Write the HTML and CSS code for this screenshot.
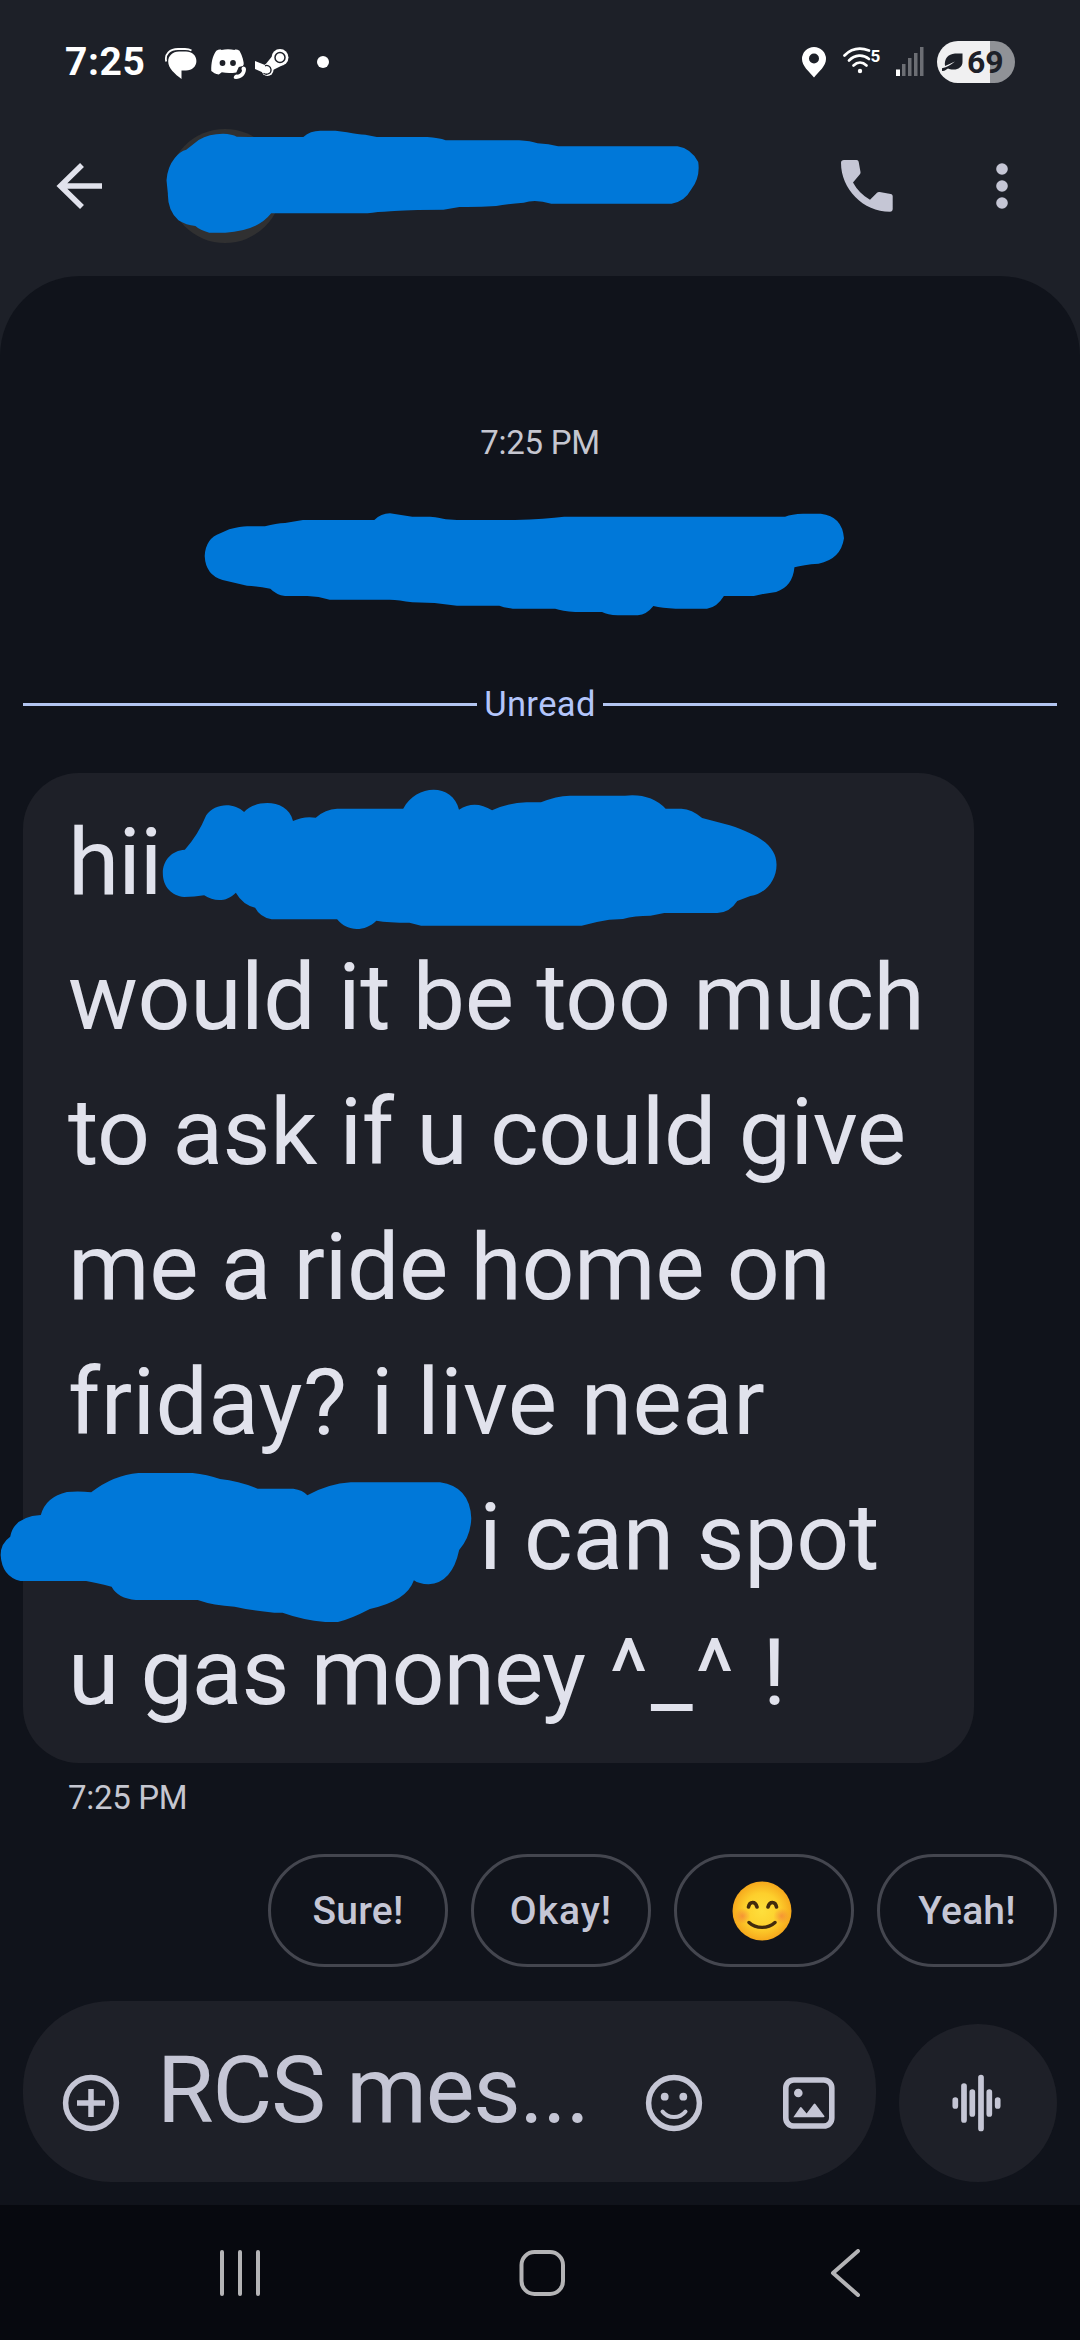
FILE: index.html
```
<!DOCTYPE html>
<html lang="en">
<head>
<meta charset="utf-8">
<title>Messages</title>
<link rel="stylesheet" href="styles.css">
</head>
<body>
<div class="screen">
  <div class="status">
    <span class="clock">7:25</span>
    <svg class="ic-chat" width="32" height="32" viewBox="0 0 32 32"><path d="M1.200 13.500C-.5 6 5 1 13 1h7c3 0 5 .6 6.500 1.500" fill="none" stroke="#fff" stroke-width="1.800"/><path d="M14 3.500h7c6 0 10.400 4 10.400 9.500S27 22.500 21 22.500h-4.500V31C10 26 3.200 20.500 3.200 13.500 3.200 8 7.500 3.500 14 3.500Z" fill="#fff"/></svg>
    <svg class="ic-discord" width="36" height="32" viewBox="0 0 36 32"><path d="M10.500 1c4-1 9-1 13 0 1-.8 3-.5 5 .8 3 5 4.500 11 4.300 15l-5 1.200-2.500 5.500c-5 .8-10 .8-14.500-.2l-3 2.200C4.500 25 2 23.500.300 22 0 14 1.500 7 5.300 1.800c2-1.300 4.200-1.600 5.200-.8Z" fill="#fff"/><circle cx="11.500" cy="14" r="2.900" fill="#1d2028"/><circle cx="22" cy="14" r="2.900" fill="#1d2028"/><path d="M31 18.500c5 3 4.500 9.500-6 11.500" fill="none" stroke="#1d2028" stroke-width="7"/><path d="M32 17.500c2 0 3 1 3 3-.5 6-5 9.500-10 9.500-2 0-2.500-1-2.200-2 .5-2 2.500-3 4-2.200 2.500-.8 3.800-2.300 4.200-4.300-1-1.500-.5-3.500 1-4Z" fill="#fff"/></svg>
    <svg class="ic-steam" width="34" height="28" viewBox="0 0 34 28"><circle cx="25" cy="8.500" r="8.500" fill="#fff"/><path d="M16.500 8 10 16 0 12v8l9 4 9-3 9-4.500Z" fill="#fff"/><circle cx="12.500" cy="21" r="6" fill="#fff"/><circle cx="25" cy="8.500" r="5" fill="none" stroke="#1d2028" stroke-width="1.500"/><path d="M8.500 24.300c4 2.500 8-.5 7.500-4-.5-3-3.500-4.500-6-3.500" fill="none" stroke="#1d2028" stroke-width="1.300"/></svg>
    <i class="more"></i>
    <svg class="ic-pin" width="24" height="31" viewBox="0 0 24 31"><path fill-rule="evenodd" d="M12 0a12 12 0 0 1 12 12c0 7-7 12.500-12 18.500C7 24.500 0 19 0 12A12 12 0 0 1 12 0Zm0 6.500a5 5 0 1 0 0 10 5 5 0 0 0 0-10Z" fill="#fff"/></svg>
    <svg class="ic-wifi" width="38" height="28" viewBox="0 0 38 28"><g fill="none" stroke="#fff" stroke-width="2.700" stroke-linecap="round"><path d="M1.500 8.500C9 1 18 .500 26 3.500"/><path d="M6 13.500c6-6 14-6.500 20-1.500"/><path d="M10.500 18.500c4-4 9-4 13 0"/></g><circle cx="17" cy="24" r="2.200" fill="#fff"/><text x="27.500" y="14.500" class="wifi-gen">5</text></svg>
    <svg class="ic-signal" width="28" height="30" viewBox="0 0 28 30"><path d="M0 22.500h4V29H0Z" fill="#fff"/><path d="M6 17h3.500v12H6ZM12 11h3.500v18H12ZM18 6h3.500v23H18ZM24 0h3.500v29H24Z" fill="#6c6e74"/></svg>
    <div class="battery">
      <svg width="21" height="19" viewBox="0 0 21 19"><path d="M20.500.500V9c0 5-5 8-9.500 7.500C9 16.500 7.500 16.300 6 15.500 4 16.500 3 18.500 0 18v-2.800C5 14 9 12 13 8.500 9 10.500 6 11.500 3 13 2 6 6 1 13 .500Z" fill="#1d2028"/></svg>
      <span>69</span>
    </div>
  </div>

  <header class="appbar">
    <svg class="back" width="48" height="48" viewBox="0 0 48 48" fill="none" stroke="#e1e2ec" stroke-width="5.600"><path d="M46 24H5M26 3 4.500 24 26 45"/></svg>
    <i class="avatar"></i>
    <svg class="call" width="52" height="52" viewBox="0 0 52 52"><path d="M3 0h12.500c1.300 0 2 .7 2.200 2L19.500 12c.1 1-.1 1.800-.8 2.500L12 22.500c4 7.300 9.500 13 17 17.300l7-7c.8-.8 1.600-1 2.700-.8l11 2c1.200.2 2 1 2 2.300V49c0 1.600-1 2.700-2.700 2.700C22 51.700 0 29 0 2.700 0 1 1.200 0 3 0Z" fill="#c5c6d5"/></svg>
    <svg class="menu" width="12" height="48" viewBox="0 0 12 48" fill="#c5c6d5"><circle cx="6" cy="7" r="5.800"/><circle cx="6" cy="24" r="5.800"/><circle cx="6" cy="41" r="5.800"/></svg>
  </header>

  <main class="thread">
    <div class="day">7:25 PM</div>
    <div class="unread"><i></i><span>Unread</span><i></i></div>
    <div class="bubble">
      <p class="l1">hii</p>
      <p class="l2">would it be too much</p>
      <p class="l3">to ask if u could give</p>
      <p class="l4">me a ride home on</p>
      <p class="l5">friday? i live near</p>
      <p class="l6">i can spot</p>
      <p class="l7">u gas money <span class="kaomoji">^_^ !</span></p>
    </div>
    <div class="sent">7:25 PM</div>
    <div class="chips">
      <span class="chip">Sure!</span>
      <span class="chip wide">Okay!</span>
      <span class="chip emoji"><svg width="60" height="60" viewBox="0 0 60 60"><defs><radialGradient id="face"><stop offset="0" stop-color="#fedf3c"/><stop offset=".6" stop-color="#fdcf2c"/><stop offset="1" stop-color="#f6a81c"/></radialGradient><radialGradient id="blush"><stop offset="0" stop-color="#f2743c" stop-opacity=".6"/><stop offset="1" stop-color="#f2743c" stop-opacity="0"/></radialGradient></defs><circle cx="30" cy="30" r="29.500" fill="url(#face)"/><circle cx="10.500" cy="35" r="8" fill="url(#blush)"/><circle cx="49.500" cy="35" r="8" fill="url(#blush)"/><g fill="none" stroke="#422b0d" stroke-linecap="round"><path d="M16.500 26c1-6 7-6 8.500 0M36 26c1.500-6 7.500-6 8.500 0" stroke-width="3.600"/><path d="M17 41.500c7 6.500 19 6.500 26 0" stroke-width="3.400"/></g></svg></span>
      <span class="chip">Yeah!</span>
    </div>
    <div class="composer">
      <div class="field">
        <svg width="60" height="60" viewBox="0 0 60 60" fill="none" stroke="#c5c6d5" stroke-width="5.500"><circle cx="30" cy="30" r="25.400"/><path d="M30 16v28M16 30h28"/></svg>
        <span class="hint">RCS mes...</span>
        <svg class="smile" width="60" height="60" viewBox="0 0 60 60" fill="none" stroke="#c5c6d5"><circle cx="30" cy="30" r="25.400" stroke-width="5.500"/><path d="M18.500 38.500c5.500 7.300 17.500 7.300 23 0" stroke-width="4" stroke-linecap="round"/><g fill="#c5c6d5" stroke="none"><circle cx="20.700" cy="23.700" r="3.900"/><circle cx="39.300" cy="23.700" r="3.900"/></g></svg>
        <svg width="60" height="60" viewBox="0 0 60 60" fill="#c5c6d5"><rect x="6.800" y="7" width="46" height="46" rx="8" fill="none" stroke="#c5c6d5" stroke-width="5.600"/><circle cx="19.300" cy="20" r="4.300"/><path d="m14.500 44 6.500-9.500q.8-1 1.600 0l5 6 7.200-9.500q.8-1 1.600 0l9 12q.5 1.300-1 1.300H15q-1.200 0-.5-.3Z"/></svg>
      </div>
      <div class="voice"><svg width="60" height="60" viewBox="0 0 60 60" stroke="#c5c6d5" stroke-width="5.700" stroke-linecap="round"><path d="M7.300 27v6M16 13v34M24.300 19v22M33 4.500v51M41.300 19v22M49.700 27v6"/></svg></div>
    </div>
  </main>

  <nav class="nav">
    <svg width="44" height="48" viewBox="0 0 44 48"><path d="M4 3v42M22 3v42M40 3v42"/></svg>
    <svg class="home" width="48" height="48" viewBox="0 0 48 48"><rect x="3.500" y="3" width="41.500" height="42" rx="13"/></svg>
    <svg width="32" height="48" viewBox="0 0 32 48"><path d="M29 2 4 24l25 22"/></svg>
  </nav>

  <svg class="scribble name" viewBox="350 50 1190 330" preserveAspectRatio="none"><path d="M362 210Q364 170 380 143Q392 122 405 118L432 89Q455 70 485 70Q505 71 515 79L540 80H660Q675 61 697 61H730L755 66Q780 73 795 73L820 80H930Q955 82 970 90H1130Q1155 92 1170 99Q1195 100 1215 108H1475Q1505 115 1520 155Q1525 200 1505 237Q1490 275 1462 280H1200Q1165 265 1140 277Q1100 281 1080 287Q1040 291 1000 290L965 298Q880 298 850 303Q820 305 800 309H590Q560 362 490 367H455Q435 360 425 347Q405 345 388 330Q364 300 365 250Z"/></svg>
  <svg class="scribble notice" viewBox="40 330 1460 330" preserveAspectRatio="none"><path d="M55 468Q57 415 90 400L110 388Q140 377 155 379H190Q215 370 235 369L275 360H435Q450 340 470 340L520 350H560Q585 353 595 358L620 360H750Q820 357 860 350H1355Q1370 342 1395 341H1435Q1483 348 1487 415Q1480 478 1430 491Q1395 494 1376 502Q1372 560 1335 576L1310 581L1285 588H1218Q1202 623 1180 626H1110Q1080 625 1060 618Q1045 644 1025 646H980Q957 645 945 636H885Q855 633 840 626H745Q725 623 715 617H620Q570 607 520 607Q490 600 470 599H335Q310 588 285 588H235Q215 584 202 566Q175 559 150 557L95 540Q57 525 55 468Z"/></svg>
  <svg class="scribble greeting" viewBox="230 140 910 440" preserveAspectRatio="none"><path d="M237 398C237 360 250 330 269 328Q288 285 300 225C312 188 340 185 355 215C370 178 418 172 426 242Q442 226 459 232Q473 206 490 205H586C605 130 658 128 667 208Q690 177 715 210Q738 187 765 186H786Q808 167 828 166H908Q945 158 967 205H990Q1005 206 1020 233L1060 255C1105 285 1128 320 1128 373C1128 420 1112 460 1090 467L1071 482Q1060 517 1042 518H965L945 526Q922 526 905 536L885 538Q863 545 845 556H612L595 547Q565 547 547 541C530 575 505 575 490 537H395Q378 530 371 502Q353 493 343 457C330 485 312 485 297 465Q283 470 268 470C250 466 237 440 237 398Z"/></svg>
  <svg class="scribble place" viewBox="0 210 750 460" preserveAspectRatio="none"><path d="M1 465Q1 430 16 410Q22 350 64 345Q72 290 105 276Q125 273 143 277Q178 225 217 219H302Q325 223 345 237Q375 243 404 266H460Q475 270 482 286Q515 251 550 247H690Q737 260 739 355Q738 410 720 450Q709 549 672 553Q657 552 649 541Q638 603 580 627Q550 657 530 666H510Q475 660 443 638H430Q395 632 368 620Q335 617 310 600H213Q185 595 175 560Q150 548 135 543H32Q3 530 1 465Z"/></svg>
</div>
</body>
</html>
```
FILE: styles.css
```
* { box-sizing: border-box; margin: 0; padding: 0; }

body { width: 1080px; height: 2340px; background: #10131b; font-family: Roboto, "Liberation Sans", sans-serif; }

svg { display: block; flex: none; }

.screen { position: relative; width: 1080px; height: 2340px; overflow: hidden; display: flex; flex-direction: column; background: #1d2028; }

/* status bar */
.status { height: 110px; padding: 0 65px 0 65px; display: flex; align-items: flex-start; color: #fff; }
.clock { width: 100px; margin-top: 39px; font-size: 39px; line-height: 46px; font-weight: 700; letter-spacing: .6px; }
.ic-chat { margin-top: 48px; }
.ic-discord { margin: 49px 0 0 14px; }
.ic-steam { margin: 49px 0 0 8px; }
.more { width: 12px; height: 12px; margin: 56px auto 0 28px; border-radius: 50%; background: #fff; }
.ic-pin { margin-top: 47px; }
.ic-wifi { margin: 47px 0 0 17px; }
.wifi-gen { font: 700 17px Roboto, sans-serif; fill: #fff; }
.ic-signal { margin: 47px 0 0 15px; }
.battery { width: 78px; height: 42px; margin: 41px 0 0 13px; padding-left: 5px; display: flex; align-items: center; border-radius: 21px; background: linear-gradient(90deg, #f0f0f1 53px, #909297 53px); color: #1d2028; }
.battery span { margin-left: 4px; font-size: 32px; line-height: 42px; font-weight: 700; }

/* conversation header */
.appbar { height: 166px; padding: 0 72px 0 56px; display: flex; align-items: flex-start; }
.back { margin-top: 52px; }
.avatar { width: 114px; height: 114px; margin: 19px auto 0 64px; border-radius: 50%; background: #303031; }
.call { margin-top: 50px; }
.menu { margin: 52px 0 0 103px; }

/* thread */
.thread { height: 1929px; padding: 147px 23px 0; border-radius: 80px 80px 0 0; background: #10131b; display: flex; flex-direction: column; }
.day, .sent { font-size: 33px; line-height: 40px; letter-spacing: -.3px; color: #c5c6d0; }
.day { text-align: center; }
.unread { margin-top: 221px; height: 41px; display: flex; align-items: center; color: #b3c5fb; }
.unread i { flex: 1; height: 3px; background: #b3c5f0; }
.unread span { width: 126px; margin-top: -2px; text-align: center; font-size: 34.5px; line-height: 40px; letter-spacing: .4px; }
.bubble { width: 951px; height: 990px; margin-top: 48px; padding: 22px 0 0 45px; border-radius: 56px; background: #1e2028; color: #e1e2ec; font-size: 93px; line-height: 135px; white-space: nowrap; }
.l1 { letter-spacing: -1px; }
.l2 { letter-spacing: -.4px; }
.l3 { letter-spacing: -.4px; }
.l4 { letter-spacing: -.4px; }
.l5 { letter-spacing: .35px; }
.l6 { padding-left: 411px; letter-spacing: -.3px; }
.l7 { letter-spacing: -.9px; }
.kaomoji { margin-left: 2px; letter-spacing: 2.6px; }
.sent { margin: 15px 0 0 45px; }

/* quick replies */
.chips { margin-top: 36px; display: flex; justify-content: flex-end; gap: 23px; }
.chip { width: 180px; height: 113px; display: flex; align-items: center; justify-content: center; border: 3px solid #44464f; border-radius: 57px; color: #c5c6d5; font-size: 39px; font-weight: 500; letter-spacing: .2px; }
.wide { letter-spacing: 1px; }
.emoji { padding-right: 4px; }

/* composer */
.composer { margin-top: 34px; display: flex; align-items: flex-end; gap: 23px; }
.field { width: 853px; height: 181px; padding: 0 34px 49px 38px; display: flex; align-items: flex-end; border-radius: 88px; background: #1e2028; }
.hint { width: 484px; margin: 0 0 -12px 36px; font-size: 92px; line-height: 108px; letter-spacing: -1.2px; color: #c5c6d5; white-space: nowrap; }
.smile { margin: 0 75px 0 3px; }
.voice { width: 158px; height: 158px; display: flex; align-items: center; justify-content: center; border-radius: 50%; background: #1e2028; }

/* system navigation */
.nav { height: 135px; padding: 0 219px 0 218px; display: flex; align-items: center; justify-content: space-between; background: #07090f; }
.nav svg { fill: none; stroke: #b4b4b6; stroke-width: 4; stroke-linecap: round; stroke-linejoin: round; }
.nav .home { margin-right: 8px; }

/* marker strokes drawn over the screen */
.scribble { position: absolute; fill: #0078d9; }
.name { left: 160.7px; top: 126.7px; width: 546.4px; height: 110px; }
.notice { left: 197.900px; top: 510px; width: 651.800px; height: 110px; }
.greeting { left: 158.400px; top: 786.700px; width: 626.800px; height: 146.700px; }
.place { left: 0; top: 1470px; width: 478.300px; height: 153.300px; }
```
